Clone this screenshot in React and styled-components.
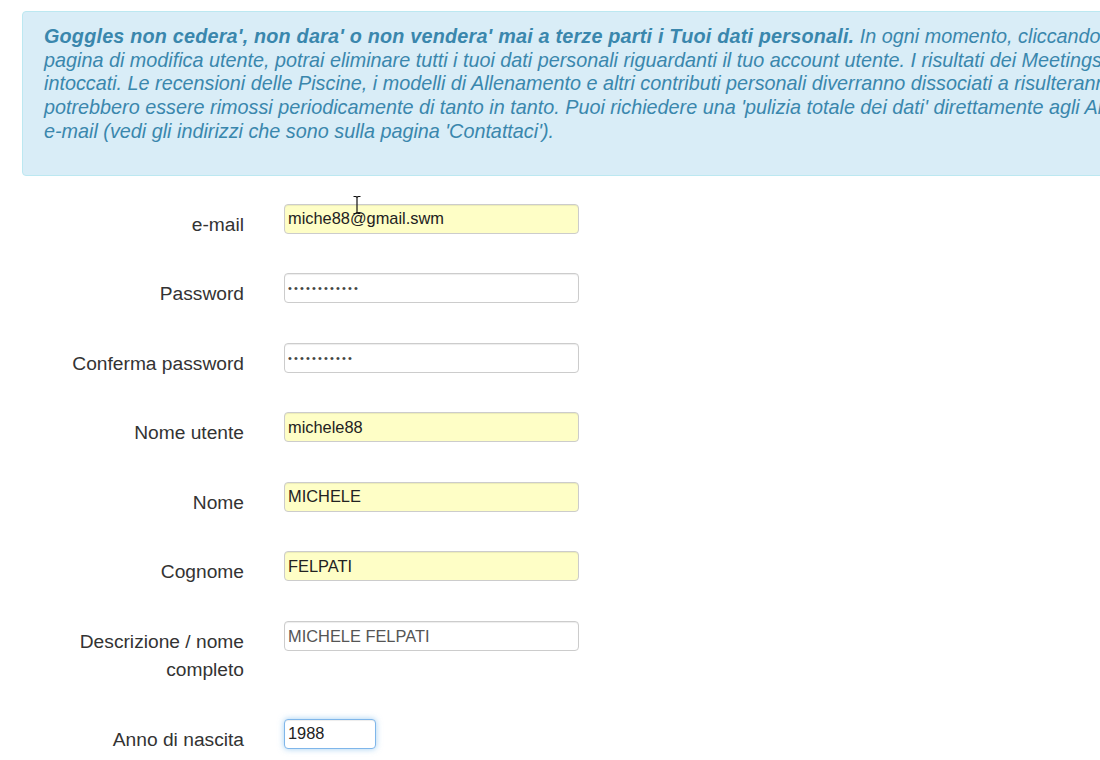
import styled, { createGlobalStyle } from "styled-components";

const GlobalStyle = createGlobalStyle`
    html, body {
        margin: 0;
        padding: 0;
        background: #fff;
        overflow: hidden;
    }
    body {
        font-family: "Liberation Sans", Arial, sans-serif;
        width: 1100px;
        height: 760px;
    }
`;

const fields = [
    { label: "e-mail", value: "miche88@gmail.swm", filled: true },
    { label: "Password", value: "••••••••••••", filled: false, secret: true },
    { label: "Conferma password", value: "•••••••••••", filled: false, secret: true },
    { label: "Nome utente", value: "michele88", filled: true },
    { label: "Nome", value: "MICHELE", filled: true },
    { label: "Cognome", value: "FELPATI", filled: true },
    { label: ["Descrizione / nome", "completo"], value: "MICHELE FELPATI", filled: false, muted: true },
    { label: "Anno di nascita", value: "1988", filled: false, short: true, focus: true },
];

const App = () => {
    return (
        <Page>
            <GlobalStyle />
            <Alert>
                <AlertText>
                    <strong>Goggles non cedera', non dara' o non vendera' mai a terze parti i Tuoi dati personali.</strong> In ogni momento, cliccando sulla<br />
                    pagina di modifica utente, potrai eliminare tutti i tuoi dati personali riguardanti il tuo account utente. I risultati dei Meetings rimarranno<br />
                    intoccati. Le recensioni delle Piscine, i modelli di Allenamento e altri contributi personali diverranno dissociati a risulteranno anonimi e<br />
                    potrebbero essere rimossi periodicamente di tanto in tanto. Puoi richiedere una 'pulizia totale dei dati' direttamente agli Amministratori via<br />
                    e-mail (vedi gli indirizzi che sono sulla pagina 'Contattaci').
                </AlertText>
            </Alert>
            <Form>
                {fields.map((f, i) => (
                    <Row key={i}>
                        <Label>
                            {Array.isArray(f.label)
                                ? f.label.map((l, j) => <span key={j}>{l}<br /></span>)
                                : f.label}
                        </Label>
                        <Control>
                            <Input
                                type="text"
                                readOnly
                                value={f.value}
                                $filled={f.filled}
                                $secret={f.secret}
                                $muted={f.muted}
                                $short={f.short}
                                $focus={f.focus}
                            />
                            {i === 0 && (
                                <Cursor width="10" height="20" viewBox="0 0 10 20">
                                    <path d="M1.5 1.5 H4 L5 2.5 L6 1.5 H8.5 M5 2.5 V17.5 M1.5 18.5 H4 L5 17.5 L6 18.5 H8.5"
                                        stroke="#111" strokeWidth="1.2" fill="none" />
                                </Cursor>
                            )}
                        </Control>
                    </Row>
                ))}
            </Form>
        </Page>
    );
};

const Page = styled.div`
    padding-top: 11px;
`;

const Alert = styled.div`
    margin-left: 22px;
    width: 1300px;
    box-sizing: border-box;
    background: #d9edf7;
    border: 1px solid #bce8f1;
    border-radius: 4px;
    padding: 13px 21px 31px;
`;

const AlertText = styled.p`
    margin: 0;
    color: #3a87ad;
    font-size: 19.8px;
    line-height: 23.7px;
    font-style: italic;
    white-space: nowrap;

    strong {
        font-weight: bold;
        letter-spacing: 0.2px;
    }
`;

const Form = styled.div`
    margin-top: 28px;
    display: flex;
    flex-direction: column;
    gap: 34.6px;
`;

const Row = styled.div`
    display: flex;
    align-items: flex-start;
`;

const Label = styled.div`
    width: 244px;
    box-sizing: border-box;
    padding-top: 7px;
    text-align: right;
    font-size: 19.2px;
    line-height: 28px;
    color: #333;
`;

const Control = styled.div`
    position: relative;
    margin-left: 40px;
`;

const Input = styled.input`
    display: block;
    box-sizing: border-box;
    width: ${p => (p.$short ? "92px" : "295px")};
    height: 30px;
    padding: 0 4px 0 3px;
    font-family: "Liberation Sans", Arial, sans-serif;
    font-size: ${p => (p.$secret ? "11px" : "16.4px")};
    letter-spacing: ${p => (p.$secret ? "2.15px" : "0")};
    color: ${p => (p.$muted ? "#555" : p.$secret ? "#444" : "#222")};
    background: ${p => (p.$filled ? "#fefec6" : "#fff")};
    border: 1px solid ${p => (p.$focus ? "#7fb6ea" : "#cccccc")};
    border-radius: 4px;
    box-shadow: ${p => (p.$focus
        ? "inset 0 1px 1px rgba(0,0,0,.075), 0 0 6px rgba(102,175,233,.6)"
        : "inset 0 1px 1px rgba(0,0,0,.075)")};
    outline: none;
`;

const Cursor = styled.svg`
    position: absolute;
    left: 68px;
    top: -9px;
    pointer-events: none;
`;

export default App;
